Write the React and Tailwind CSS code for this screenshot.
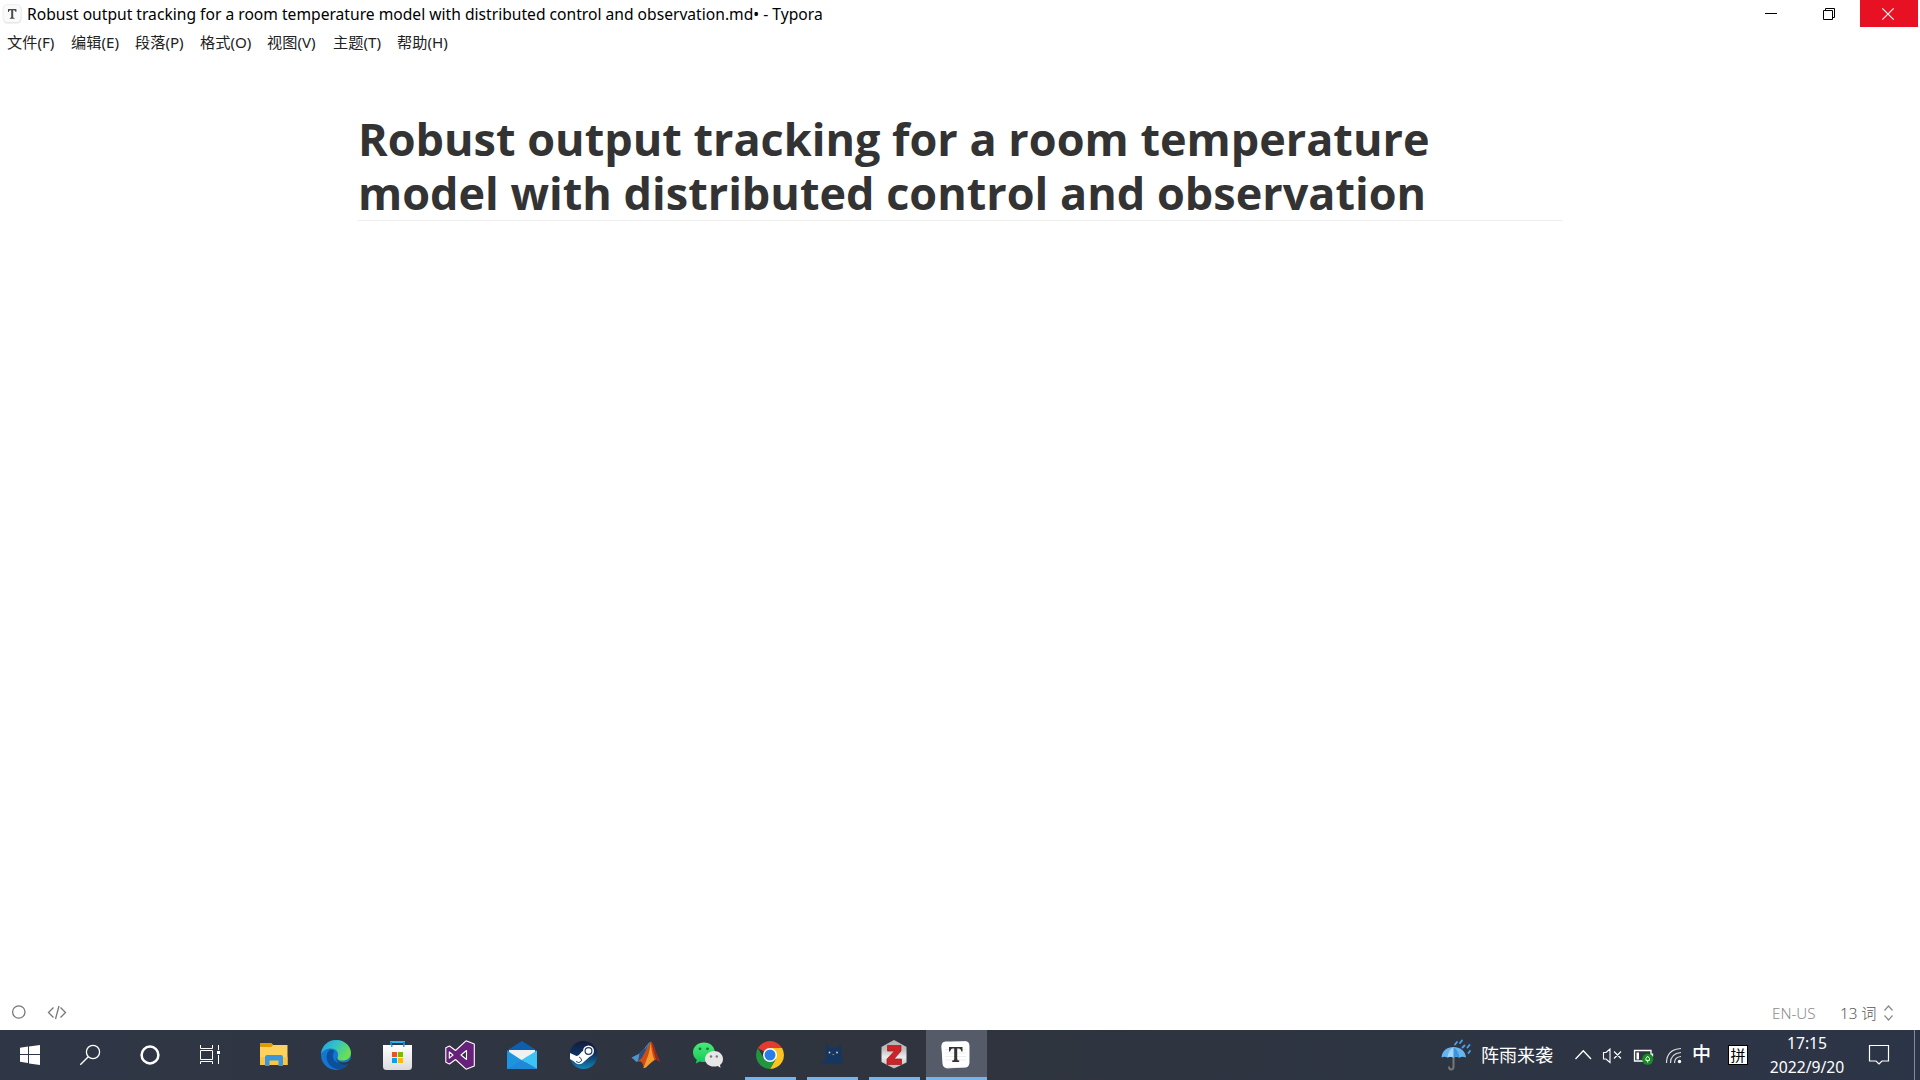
const MENU = [
  { label: '文件(F)', box: 'w-16' },
  { label: '编辑(E)', box: 'w-16' },
  { label: '段落(P)', box: 'w-[65px]' },
  { label: '格式(O)', box: 'w-[67px]' },
  { label: '视图(V)', box: 'w-[66px]' },
  { label: '主题(T)', box: 'w-16' },
  { label: '帮助(H)', box: 'w-16' },
];

function TyporaMark() {
  return (
    <svg className="h-[24px] w-[27px] shrink-0" viewBox="0 0 27 24">
      <rect x="3" y="5" width="18.5" height="18.5" rx="4.5" fill="#e3e3e3" />
      <rect x="3" y="4.5" width="18" height="18" rx="4.5" fill="#fafafa" stroke="#e6e6e6" strokeWidth=".6" />
      <path d="M8 9h8.4v3h-.8q-.3-1.8-1.500-1.800H13.200V17q0 .9 1.400.9v.8H9.800v-.8q1.400 0 1.400-.9v-6.800h-.9q-1.200 0-1.500 1.800H8z" fill="#4a4a4a" />
    </svg>
  );
}

function TitleBar() {
  return (
    <header className="flex h-[27px] items-start">
      <TyporaMark />
      <div className="h-[27px] whitespace-nowrap text-[15.630px] leading-[28px] text-black">
        Robust output tracking for a room temperature model with distributed control and observation.md• - Typora
      </div>
      <div className="ml-auto flex">
        <svg className="h-[27px] w-[58px]" viewBox="0 0 58 27">
          <path d="M21 13.500h12" stroke="#000" />
        </svg>
        <svg className="h-[27px] w-[58px]" viewBox="0 0 58 27" fill="none" stroke="#000">
          <path d="M21.500 10.500h9v9h-9zM23.500 10V8.500h9v9H31" />
        </svg>
        <div className="h-[27px] w-[58px] bg-[#e81123]">
          <svg className="h-[27px] w-[58px]" viewBox="0 0 58 27">
            <path d="M22.300 8.300l11.400 11.400M33.700 8.300L22.300 19.700" stroke="#fff" strokeWidth="1.100" />
          </svg>
        </div>
        <div className="w-[2px]" />
      </div>
    </header>
  );
}

function MenuBar() {
  return (
    <nav className="flex h-[33px] pl-[7px] text-[15.200px] leading-[31px] text-[#222]">
      {MENU.map((m) => (
        <div key={m.label} className={`${m.box} whitespace-nowrap`}>{m.label}</div>
      ))}
    </nav>
  );
}

function StatusBar() {
  return (
    <footer className="flex h-9 items-center text-[15.200px]">
      <svg className="h-9 w-20" viewBox="0 0 80 36" fill="none" stroke="#777" strokeWidth="1.300">
        <circle cx="18.800" cy="18" r="6.200" />
        <path d="M53.500 13.500L48.500 18.500l5 5M60.500 13.500l5 5-5 5M59 12l-3.500 13" />
      </svg>
      <div className="ml-auto w-[68px] whitespace-nowrap pt-[2px] font-light text-[#8c8c8c]">EN-US</div>
      <div className="w-[43px] whitespace-nowrap pt-[2px] font-light text-[#555]">13 词</div>
      <svg className="h-9 w-[37px]" viewBox="0 0 37 36" fill="none" stroke="#888" strokeWidth="1.200">
        <path d="M1.500 16.500l4-4.500 4 4.500M1.500 21.500l4 4.500 4-4.500" />
      </svg>
    </footer>
  );
}

function Explorer() {
  return (
    <>
      <path d="M16 13h11l2 2h14.500v20H16z" fill="#ffd25e" />
      <path d="M16 13h11l2.500 2-2.500 2H16z" fill="#e09a00" />
      <path d="M16 27h27.500v8H16z" fill="#fbc540" />
      <path d="M21 36v-9q0-2 2-2h14q2 0 2 2v9h-4.500v-5.500h-9V36z" fill="#3a96dd" />
    </>
  );
}

function Edge() {
  return (
    <>
      <circle cx="30" cy="25" r="15" fill="#1576cf" />
      <path d="M15 24C16 15 22.500 10 30 10c9 0 15 6.500 15 13 0 5-4 7.500-8.500 7.500-4 0-5.500-1.500-5-3 1.500-3 .5-9-7-9-4.500 0-8 2.500-9.500 5.500z" fill="url(#edgeTop)" />
      <path d="M24 19.500c-3.500 3-4.500 8-2 13 3 5.500 9 8 14 6.300 3-1.200 6-4.300 7-6.800-4 2.500-9.500 2.500-13-.2-3.800-2.800-4-7.300-1.500-10.300-1-1.500-2.800-2.300-4.500-2z" fill="#0c4f9c" />
      <path d="M31.500 26.500c-1.800 3 1.200 6 5.500 6 3.500 0 5.500-1 8-3.500v5l-1.500-.5c-3 1.500-7 1.500-9.500 0-3-1.500-4.500-4.500-2.500-7z" fill="#2d3642" />
    </>
  );
}

function Store() {
  return (
    <>
      <path d="M23 16v-4h13v4" fill="none" stroke="#28b4f0" strokeWidth="2" />
      <path d="M22 12h2v4h-2zM35 12h2v4h-2z" fill="#1683c7" />
      <path d="M15 15h29v21.500q0 3.500-3.500 3.500h-22Q15 40 15 36.500z" fill="url(#storeBag)" />
      <path d="M23 15h1.500v2H23zM35 15h1.500v2H35z" fill="#35a5dd" />
      <path d="M24 22h5v5h-5z" fill="#f25022" />
      <path d="M30 22h5v5h-5z" fill="#7fba00" />
      <path d="M24 28h5v5h-5z" fill="#00a4ef" />
      <path d="M30 28h5v5h-5z" fill="#ffb900" />
    </>
  );
}

function VisualStudio() {
  return (
    <>
      <path fillRule="evenodd" d="M36 10.800L44.300 14v22L36 39.200 25.500 29.500 19.500 34 15.800 32.300V17.700L19.500 16l6 4.500zM36.500 20.500L31 25l5.500 4.500zM19.300 21.800v6.400L23 25z" fill="#68217a" stroke="#fff" strokeWidth="1.100" strokeLinejoin="round" />
    </>
  );
}

function Mail() {
  return (
    <>
      <path d="M15 20.500L30 11l15 9.500v5H15z" fill="#0d5fae" />
      <path d="M17 20h26v8L30 34 17 27z" fill="#f1f1f1" />
      <path d="M15 20.500l14.500 9.500L45 39H15z" fill="#1d94e0" />
      <path d="M45 20.500V39L29.500 30z" fill="#3cc4f4" />
      <path d="M15 39l14.500-9L45 39z" fill="#2188d8" />
    </>
  );
}

function Steam() {
  return (
    <>
      <circle cx="29.500" cy="25" r="14" fill="url(#steamDisc)" />
      <path d="M16 23l7.500 3.500 5-5.500L37 25.500l-5 4.500-4 3.500q-5 2-8-2L16 29z" fill="#fff" />
      <circle cx="34.500" cy="21" r="5.500" fill="#fff" />
      <circle cx="34.500" cy="21" r="3.400" fill="none" stroke="#20375e" strokeWidth="1.200" />
      <circle cx="25" cy="29.500" r="4" fill="#fff" />
      <path d="M22 31.500q3 2.500 5.500-.5.500-3-2.500-4" fill="none" stroke="#315579" strokeWidth="1" />
    </>
  );
}

function Matlab() {
  return (
    <>
      <path d="M15.500 27.500l8-4q2-3 4.500-4.500 4-6 6.500-7.500L28 27l-7.500 5z" fill="#4d94c8" />
      <path d="M23.500 23.500q4-5 6-5l3-5-5.500 15-5 3z" fill="#274e7c" />
      <path d="M20.500 31.500q4-1 6-5l8.500-15q2 1 4 8 2.500 8 5 12-3-2.500-6-1.500-2.500 2-6 5-2.500 3-4.500 3 0-5-3-6.500z" fill="#d24b14" />
      <path d="M35 11.500q-1.500 12-4.500 18-1.500 5-3 8.500 2 .5 4.500-2.500 4.500-4.500 6.500-5.500-3.500-8-3.500-18.500z" fill="#f29b2e" />
      <path d="M35 11.500q3 11 5 18l4 2.500q-2-3-5-12.500-2-7-4-8z" fill="#9d2618" />
    </>
  );
}

function WeChat() {
  return (
    <>
      <path d="M26 12.500c6 0 10.800 4.200 10.800 9.700S32 32 26 32q-2 0-4-.6L17.800 33.500l1-3.800c-2.500-1.800-3.800-4.500-3.800-7.500 0-5.500 5-9.700 11-9.700z" fill="url(#wechatBubble)" />
      <circle cx="22" cy="18.800" r="1.400" fill="#187540" />
      <circle cx="29.500" cy="18.800" r="1.400" fill="#187540" />
      <path d="M36 21c5 0 9 3.500 9 8 0 2.500-1 4.500-3 6l.6 2.700-3-1.600q-1.800.5-3.600.5c-5 0-9-3.300-9-7.600s4-8 9-8z" fill="#e6e6e6" />
      <circle cx="33" cy="26.500" r="1.200" fill="#777" />
      <circle cx="38.800" cy="26.500" r="1.200" fill="#777" />
    </>
  );
}

function Chrome() {
  return (
    <>
      <path d="M30 25L17.900 18A14 14 0 0 1 42.100 18L30 18z" fill="#e33b2e" />
      <path d="M30 18H42.100A14 14 0 0 1 30 39l6.100-10.500z" fill="#fcc31e" />
      <path d="M17.900 18A14 14 0 0 0 30 39l6.100-10.500L30 32l-6.100-3.500z" fill="#22963f" />
      <circle cx="30" cy="25" r="7" fill="#fff" />
      <circle cx="30" cy="25" r="5.500" fill="#2a7de9" />
    </>
  );
}

function Cat() {
  return (
    <>
      <path d="M23.800 14l4 3.800h7l4-3.800q.7 6 .7 10l1.500 10H24l-5 .3q-1.500-1.300.5-3.300l3 1q1.500-3 1-8z" fill="#16355f" />
      <circle cx="27.500" cy="22.500" r=".9" fill="#c7d4e8" />
      <circle cx="35" cy="22.500" r=".9" fill="#c7d4e8" />
      <path d="M30 24.300h2.500l-1.200 1z" fill="#a9a5b2" />
    </>
  );
}

function Zotero() {
  return (
    <>
      <path d="M30 10l12.500 7v15.500L30 38.500l-12.500-6.500V17z" fill="url(#zoteroHex)" />
      <path d="M30 10l12.500 7L30 25 17.500 17z" fill="#c5c5c5" opacity=".6" />
      <path d="M23.500 15.500h13.500v5.500l-7 8h7.500V34.500H23V29l7.500-8h-7z" fill="#cc2229" stroke="#991b1e" strokeWidth=".7" strokeLinejoin="round" />
    </>
  );
}

function Typora() {
  return (
    <>
      <path d="M19.500 12.500l19-1.500q4.500-.2 4.800 4v17.500q-.3 4.500-4.500 4.800l-17 1.200q-4 0-4.600-4L15.500 17q0-4 4-4.500z" fill="#d9d9d9" />
      <path d="M19.500 11.500h20q3.800.3 3.800 4.300v17.400q-.3 4-4.300 4.300l-18 .2q-4 0-4.500-4l-1-17.500q0-4.300 4-4.700z" fill="#fff" />
      <path d="M19 19.500h21M19 23h21M19 26.500h21M19 30h21" stroke="#e7e7e7" strokeWidth=".7" />
      <path d="M23 17h13.500v4.500h-1.200q-.5-3-2.500-3h-1.600V29q0 1.500 2 1.500V32h-7v-1.500q2 0 2-1.500V18.500h-1.500q-2 0-2.500 3H23z" fill="#333" />
    </>
  );
}

const APPS = [
  { name: 'explorer', Icon: Explorer },
  { name: 'edge', Icon: Edge },
  { name: 'store', Icon: Store },
  { name: 'visual-studio', Icon: VisualStudio },
  { name: 'mail', Icon: Mail },
  { name: 'steam', Icon: Steam },
  { name: 'matlab', Icon: Matlab },
  { name: 'wechat', Icon: WeChat },
  { name: 'chrome', Icon: Chrome, open: true },
  { name: 'cat', Icon: Cat, open: true },
  { name: 'zotero', Icon: Zotero, open: true },
  { name: 'typora', Icon: Typora, active: true },
];

function Gradients() {
  return (
    <svg className="absolute h-0 w-0">
      <defs>
        <linearGradient id="edgeTop" x1="0" x2="1" y1="0" y2=".5">
          <stop offset="0" stopColor="#1c9fe0" />
          <stop offset=".5" stopColor="#35c3c5" />
          <stop offset="1" stopColor="#6be04e" />
        </linearGradient>
        <linearGradient id="storeBag" x1="0" x2="0" y1="0" y2="1">
          <stop offset="0" stopColor="#fff" />
          <stop offset="1" stopColor="#dcdcdc" />
        </linearGradient>
        <linearGradient id="steamDisc" x1="0" x2="0" y1="0" y2="1">
          <stop offset="0" stopColor="#131a3e" />
          <stop offset=".5" stopColor="#0d3564" />
          <stop offset="1" stopColor="#1387b8" />
        </linearGradient>
        <linearGradient id="wechatBubble" x1="0" x2="0" y1="0" y2="1">
          <stop offset="0" stopColor="#4bea77" />
          <stop offset="1" stopColor="#10c957" />
        </linearGradient>
        <linearGradient id="zoteroHex" x1="0" x2="0" y1="0" y2="1">
          <stop offset="0" stopColor="#8a8a8a" />
          <stop offset=".6" stopColor="#ececec" />
          <stop offset="1" stopColor="#b5b5b5" />
        </linearGradient>
      </defs>
    </svg>
  );
}

function AppButton({ Icon, open, active }) {
  return (
    <div className="flex h-[50px] w-[62px] flex-col">
      <div className={active ? 'h-[47px] w-[61px] bg-[#555b68]' : 'h-[47px] w-[61px]'}>
        <svg className="h-[47px] w-[61px]" viewBox="0 0 61 47"><Icon /></svg>
      </div>
      {open && <div className="ml-[5px] h-[3px] w-[51px] bg-[#76b4ee]" />}
      {active && <div className="h-[3px] w-[61px] bg-[#76b4ee]" />}
    </div>
  );
}

function SystemButtons() {
  return (
    <div className="flex w-[244px]">
      <svg className="h-[50px] w-[60px]" viewBox="0 0 60 50" fill="#fff">
        <path d="M20 17.700l8-1.200V24h-8zM29 16.400L40 15v9H29zM20 25h8v8l-8-1.200zM29 25h11v10l-11-1.500z" />
      </svg>
      <svg className="h-[50px] w-[60px]" viewBox="0 0 60 50" fill="none" stroke="#fff" strokeWidth="1.300">
        <circle cx="33" cy="22" r="6.600" />
        <path d="M28.300 26.700L20.300 34.700" />
      </svg>
      <svg className="h-[50px] w-[60px]" viewBox="0 0 60 50" fill="none">
        <circle cx="30" cy="25" r="8.400" stroke="#fff" strokeWidth="2.500" />
      </svg>
      <svg className="h-[50px] w-[60px]" viewBox="0 0 60 50" fill="none" stroke="#fff">
        <path d="M20.500 20.500h12v9h-12zM20.500 15v3.500h12V15M20.500 34v-2.500h12V34M38.500 15v5M38.500 25v9" />
        <path d="M37 21h3v3h-3z" fill="#fff" stroke="none" />
      </svg>
    </div>
  );
}

function Tray() {
  return (
    <div className="ml-auto flex h-[50px] text-white">
      <svg className="h-[50px] w-[41px]" viewBox="0 0 41 50">
        <path d="M13.500 26v11.500q-.5 2-2.500 2t-2-3" fill="none" stroke="#777" strokeWidth="2" />
        <path d="M1.500 27.500C2 21 7 17 13.500 17S25.500 21 26 27.500q-3.500-1.500-6.500 0-3-1.500-6 0-3-1.500-6 0-3-1.500-6 0z" fill="#66b5ef" />
        <path d="M7.500 27.500q.5-7 6-10.500 5.500 3.500 6 10.500-3-1.500-6 0-3-1.500-6 0z" fill="#a3d3f6" />
        <path d="M13.500 27.500V17q5.500 3.500 6 10.500-3-1.500-6 0z" fill="#3d94de" />
        <path d="M15 14.500l2-2.500M20 13l2-2.500M22.500 17.500l2-2M27.500 17.500l2-2.500M28.500 23l1.500-2" stroke="#4c9fe8" strokeWidth="1.900" strokeLinecap="round" />
      </svg>
      <div className="w-[89px] whitespace-nowrap text-[18px] leading-[50px]">阵雨来袭</div>
      <svg className="h-[50px] w-[122px]" viewBox="0 0 122 50" fill="none" stroke="#fff" strokeWidth="1.300">
        <path d="M5.500 29l7.800-8.200L21 29" />
        <path d="M33.500 22.500h2.500l4-3.500v13.500l-4-3.500h-2.500zM44 21.500l7 7M51 21.500l-7 7" strokeWidth="1.100" />
        <path d="M64.500 20.500h16.500v10.500H64.500zM82.500 23.500v3" />
        <path d="M66.500 22.500h2.500v7h-2.500z" fill="#fff" stroke="none" />
        <circle cx="77.700" cy="29.200" r="5.600" fill="#128f1d" stroke="none" />
        <path d="M77.700 26.200q-2.600 2.300-1.800 4.200h3.600q.8-1.900-1.800-4.200zM77.700 30v2.500" strokeWidth="1" />
        <path d="M96.500 33q0-13.500 14.500-14.500M100.500 33q0-9.500 10.500-10.500M104.500 33q0-6 6.500-6.500" strokeWidth="1.200" stroke="#ddd" />
        <circle cx="109.500" cy="31.500" r="1.700" fill="#fff" stroke="none" />
      </svg>
      <div className="w-9 text-[19px] font-medium leading-[49px]">中</div>
      <div className="mt-[15px] flex h-5 w-5 items-center justify-center border border-black bg-white text-[15px] leading-none text-black">拼</div>
      <div className="ml-[14px] flex w-[90px] flex-col items-center whitespace-nowrap pt-[2px] text-[15.700px] leading-[23px]">
        <div>17:15</div>
        <div className="pt-px">2022/9/20</div>
      </div>
      <svg className="h-[50px] w-[68px]" viewBox="0 0 68 50" fill="none" stroke="#fff" strokeWidth="1.200">
        <path d="M17.500 15.500h19v15.500H30l-3 3-3-3h-6.500z" />
        <path d="M62.500 0v50" stroke="#858b95" strokeWidth="1" />
      </svg>
    </div>
  );
}

function Taskbar() {
  return (
    <div className="flex h-[50px] bg-linear-to-r from-[#2f3645] via-[#2f343e] to-[#2c3547]">
      <Gradients />
      <SystemButtons />
      {APPS.map((a) => <AppButton key={a.name} Icon={a.Icon} open={a.open} active={a.active} />)}
      <Tray />
    </div>
  );
}

export default function App() {
  return (
    <div className="flex h-[1080px] w-[1920px] flex-col overflow-hidden bg-white font-['Noto_Sans','Noto_Sans_CJK_SC',sans-serif]">
      <TitleBar />
      <MenuBar />
      <main className="flex-1 pl-[358px] pt-[52px]">
        <h1 className="w-[1205px] border-b border-[#eee] font-['Open_Sans',sans-serif] text-[45px] font-bold leading-[54px] text-[#333]">
          Robust output tracking for a room temperature model with distributed control and observation
        </h1>
      </main>
      <StatusBar />
      <Taskbar />
    </div>
  );
}
